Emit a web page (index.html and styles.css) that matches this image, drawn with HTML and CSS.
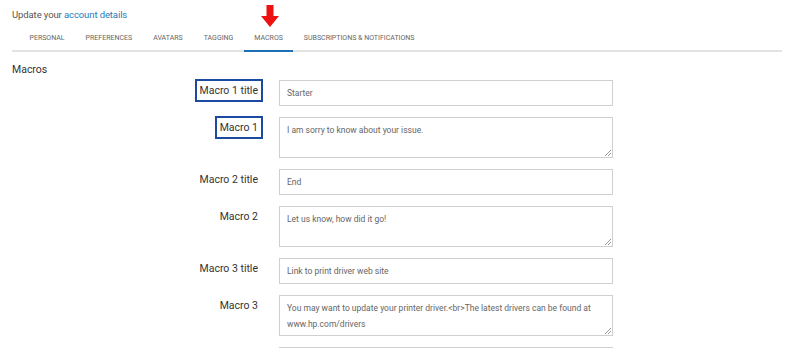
FILE: index.html
```html
<!DOCTYPE html>
<html>
<head>
<meta charset="utf-8">
<link rel="stylesheet" href="styles.css">
</head>
<body>
<div class="page">
  <div class="intro">Update your <a class="link" href="#">account details</a></div>
  <nav class="tabs">
    <span class="tab">Personal</span>
    <span class="tab">Preferences</span>
    <span class="tab">Avatars</span>
    <span class="tab">Tagging</span>
    <span class="tab active">Macros
      <svg class="arrow" width="18" height="22" viewBox="0 0 18 22"><path d="M5.5 0H12.5V11H18L9 22L0 11H5.5Z" fill="#ee1111"/></svg>
    </span>
    <span class="tab">Subscriptions &amp; Notifications</span>
  </nav>
  <h2 class="section-title">Macros</h2>
  <form class="form">
    <label class="label"><span class="mark">Macro 1 title</span></label>
    <div class="field input">Starter</div>
    <label class="label"><span class="mark">Macro 1</span></label>
    <div class="field area">I am sorry to know about your issue.</div>
    <label class="label">Macro 2 title</label>
    <div class="field input">End</div>
    <label class="label">Macro 2</label>
    <div class="field area">Let us know, how did it go!</div>
    <label class="label">Macro 3 title</label>
    <div class="field input">Link to print driver web site</div>
    <label class="label">Macro 3</label>
    <div class="field area">You may want to update your printer driver.&lt;br&gt;The latest drivers can be found at www.hp.com/drivers</div>
    <label class="label"></label>
    <div class="field input"></div>
  </form>
</div>
</body>
</html>
```

FILE: styles.css
```css
* { box-sizing: border-box; }
html, body { margin: 0; padding: 0; background: #fff; overflow: hidden; }
body { font-family: Roboto, "Liberation Sans", sans-serif; color: #333; }
.page { padding: 9px 17px 0 12px; }
.intro { font-size: 9.5px; color: #555; line-height: 12px; letter-spacing: -0.1px; }
.link { color: #2a7ab8; text-decoration: none; }
.tabs { display: flex; padding-left: 7px; margin-top: 4px; border-bottom: 2px solid #e3e3e3; }
.tab { position: relative; font-size: 7px; text-transform: uppercase; color: #666; padding: 8px 10.5px 7px; line-height: 10px; }
.tab.active { border-bottom: 2px solid #1f6fb5; margin-bottom: -2px; }
.arrow { position: absolute; left: 50%; top: -20px; margin-left: -8px; }
.section-title { font-size: 10.5px; font-weight: normal; color: #333; margin: 11px 0 0; line-height: 14px; }
.form { display: grid; grid-template-columns: 246px 334px; column-gap: 21px; row-gap: 11px; margin-top: 3px; }
.label { text-align: right; font-size: 10.5px; color: #333; line-height: 14px; padding-top: 4px; }
.mark { outline: 2px solid #1c4aa0; outline-offset: 3px; }
.field { border: 1px solid #cfcfcf; background: #fff; font-size: 8.5px; color: #666; padding: 0 7px; }
.input { height: 26px; line-height: 24px; }
.area { height: 41px; line-height: 16px; padding-top: 4px; position: relative; }
.area::after { content: ""; position: absolute; right: 1px; bottom: 1px; width: 6px; height: 6px; background: linear-gradient(135deg, transparent 45%, #999 45%, #999 55%, transparent 55%, transparent 70%, #999 70%, #999 80%, transparent 80%); }
```
